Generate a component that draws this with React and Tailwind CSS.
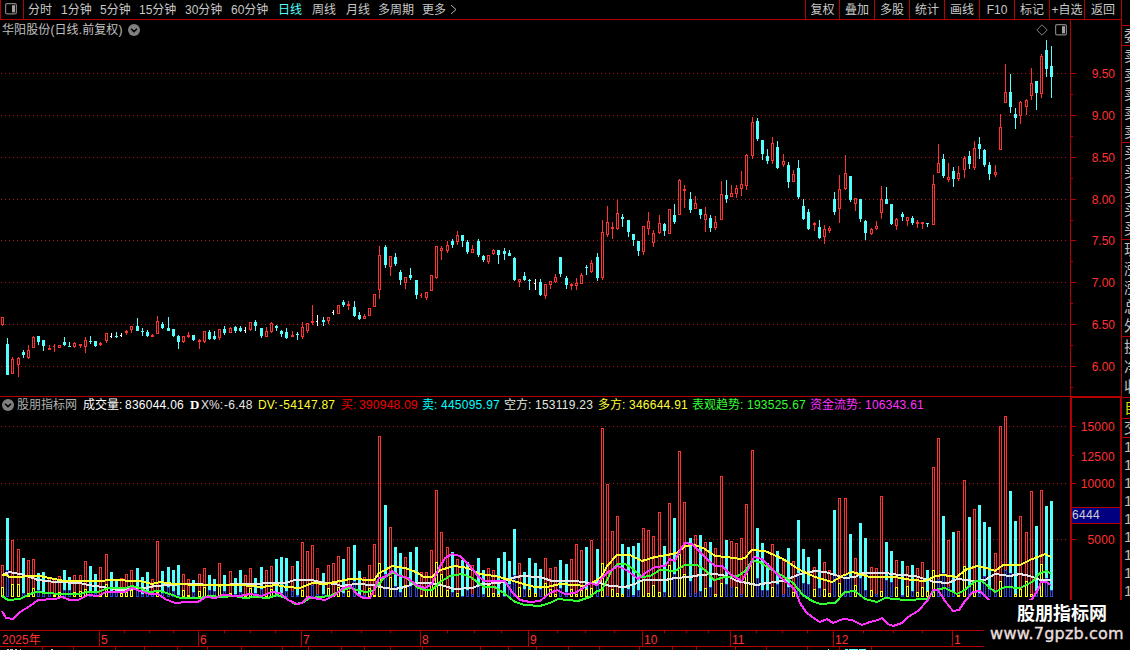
import React from "react";

const CYAN = "#54ffff";
const RED = "#ff3232";
const LINE = "#b40000";

// type, high, body top, body bottom, low
const CANDLES = `r317,317,325,326 c338,344,375,375 r357,359,374,374 r357,358,365,377 c350,352,355,358 r345,350,358,359 r336,337,348,348 c336,336,342,345 c340,340,346,351 r345,348,350,350
r344,346,347,352 r345,345,348,348 c337,342,345,346 c342,346,347,347 r342,343,347,348 r344,344,346,348 r337,340,347,353 c336,341,342,344 c341,341,346,347 r342,343,345,346
r333,333,341,343 w333,336,337,338 c332,336,337,338 w333,335,336,337 r330,331,333,335 r326,326,330,333 c318,326,331,331 c328,331,332,336 c330,332,336,337 r334,335,337,337
r316,321,334,334 c322,324,328,329 c317,328,331,331 c329,329,336,337 c335,336,342,349 r336,336,342,343 r332,335,337,338 c335,335,340,341 r339,340,342,349 r331,331,342,343
c330,332,339,340 c331,336,339,340 r329,329,338,340 c326,329,333,335 r327,328,333,333 c326,327,331,333 c326,328,331,332 w327,330,331,333 r322,322,330,331 c320,322,326,331
c328,328,336,338 r327,331,337,337 r322,323,332,333 c325,326,328,331 c330,331,334,337 c328,332,338,339 r331,335,337,337 c332,334,335,340 r322,327,337,339 r323,323,331,333
r305,321,323,325 w315,321,322,326 c317,320,322,326 r317,317,321,324 w310,312,313,315 r305,305,314,314 c300,302,305,307 r301,304,306,310 c301,307,316,317 c312,315,319,320
r314,316,319,319 r308,308,316,316 r294,294,307,307 r246,255,290,299 c245,247,265,268 r256,256,267,276 c253,257,264,266 c270,272,280,285 r277,277,283,289 c268,275,278,280
c280,280,295,299 r293,295,296,298 r292,292,298,300 r275,275,291,291 r246,246,278,279 r246,248,251,260 r241,245,251,253 c239,241,245,248 r231,235,242,245 c235,235,241,247
c240,242,252,254 r245,249,253,253 c239,241,255,257 c255,256,260,262 r255,255,262,264 r249,250,254,255 c250,250,255,264 c248,251,254,260 c250,253,256,256 c257,258,280,281
r279,279,282,287 c272,276,280,281 c279,280,281,290 w279,283,284,290 c279,282,295,296 r284,284,296,299 r281,281,285,289 r274,277,282,283 c257,257,274,277 c276,278,285,289
r283,284,286,290 r278,283,286,290 r273,275,284,284 c265,267,268,275 r260,263,272,273 c253,257,278,281 r220,232,278,280 r206,222,235,237 r222,227,229,239 r200,213,229,230
c214,217,219,227 c220,220,232,237 c234,234,240,246 c241,241,251,256 r226,226,252,255 r212,221,229,235 r230,233,243,247 r215,223,233,234 c223,224,231,236 r209,209,234,234
c204,215,222,224 r179,180,215,215 r185,189,191,208 c192,199,210,213 r196,203,209,209 c209,209,215,219 r207,214,220,232 c215,218,228,232 r216,222,228,230 r181,194,220,220
c180,195,199,203 r185,193,197,197 r185,188,194,198 r171,184,189,196 r154,155,186,190 r117,122,156,159 c118,121,139,141 c140,140,154,160 c149,156,161,164 r137,143,161,164
c141,147,168,169 r154,161,165,167 c162,165,182,188 r170,174,182,182 c160,168,197,199 c199,206,219,220 c209,212,229,230 r222,223,225,231 c220,227,238,239 r225,229,237,244
r226,228,231,233 c192,199,212,215 r175,189,209,223 r155,173,189,190 c176,176,200,202 r198,198,204,211 c199,199,219,222 c220,221,233,240 r228,229,234,235 r221,226,229,230
r186,199,213,219 c187,199,204,204 c204,204,224,225 r218,219,226,230 c212,214,217,221 r217,217,221,226 c216,218,223,225 r220,222,224,228 r222,222,224,229 c223,223,224,227
r175,184,225,225 r144,163,173,173 c154,159,176,178 r163,177,180,182 c167,171,179,187 r166,173,179,181 r156,158,170,178 c151,156,164,169 r141,148,168,170 c137,144,149,159
c149,150,165,167 c162,165,174,180 r165,172,175,177 r114,127,150,150 r64,92,103,103 c74,92,107,113 c108,114,118,129 r101,102,116,124 r99,100,107,115 r68,83,96,100
c81,81,93,110 r54,56,94,98 c40,50,69,77 c46,66,77,98`
  .split(/\s+/)
  .map((s) => [s[0], ...s.slice(1).split(",").map(Number)]);

// bar colour, bar top, flow colour (y/b), flow top
const VOLUMES = `r565y587 c518b570 r540y584 r549y584 c558b593 r560y593 r559y588 c573b590 c572b592 r577b593
r578y595 r576y592 c570b590 c577b590 r575y592 r575y591 r561y589 c566b592 c574b593 r567y594
r554y584 c572b592 c579b592 r578y593 r574y592 r570y590 c568b590 c577b594 c572b593 r579b594
r541y592 c571b593 c567b587 c570b591 c565b595 r574y590 r579y595 c580b592 r574y591 r568y587
c575b590 c579b591 r563y586 c575b591 r571y593 c578b594 c570b592 r575y595 r568y588 c578b593
c567b589 r570y594 r566y589 c559b594 c557b593 c558b591 r566b591 c561b595 r542y590 r551y596
r545b585 r568b594 c573b594 r565y588 r563y596 r556y587 c559b593 r547y591 c545b581 c571b596
r577b595 r565y588 r544y595 r436y563 c505b574 r527y577 c547b586 c553b592 r557y585 c552b586
c547b585 r572y595 r572y590 r550y582 r490y562 r532y574 r547y590 c552b592 r559y593 c560b596
c562b590 r565b594 c558b586 c570b594 r568y585 r570y593 c558y594 c552b596 c561b584 c529b575
r563y587 c572b589 c558y589 c563y593 c569b589 r558y583 r568y589 r567y594 c560b588 c564b592
r559y589 r544y594 r550y590 c547y589 r540y588 c549b584 r428y563 r484b596 r531y589 r516y593
c544y594 c547b589 c546b595 c543b590 r528y579 r530y593 r536y585 r512y592 c546b592 r503y565
c518b574 r451y554 r502y574 c538b581 r535b593 c535b591 r542y588 c542b587 r548y594 r476y583
c540b584 r541b587 r543y587 r538b594 r504y570 r450y560 c528b578 c543b590 c563b590 r544y587
c551b584 r560b594 c548b587 r561y592 c520b573 c549b583 c557b584 r567y589 c549b588 r562y589
r570y593 c510b574 r498y583 r498b575 c534b577 r558y585 c523b578 c538b590 r567y590 r568b594
r496y591 c542b580 c551b582 r560y587 c561b595 r566y586 c565b591 r568y592 r562y587 c570y591
r467y570 r438b579 c516b573 r540b587 c532b592 r531y595 r480y566 c517b587 r509y580 c505b593
c522b576 c527b589 r553b590 r426y581 r416b570 c491b573 c521y594 r516y589 r532y581 r491y594
c526b591 r490y564 c506b578 c501b590`
  .split(/\s+/)
  .map((s) => [s[0], +s.slice(1, 4), s[4], +s.slice(5)]);

const YELLOW_LINE =
  "2,575 7,575 9,577 40,576 64,581 100,581 110,580 140,581 152,584 160,582 175,584 200,585 240,585 262,587 276,585 287,587 300,588 312,583 325,584 335,582 350,579 374,580 379,573 385,570 392,566 405,568 416,572 424,577 432,577 440,570 455,566 468,568 480,574 495,576 510,580 520,583 535,587 547,587 560,584 575,585 585,586 597,580 602,576 607,566 617,555 630,555 642,561 655,557 667,555 677,553 685,546 695,545 705,549 715,556 727,557 740,559 745,558 752,550 765,551 783,559 800,570 815,577 832,582 842,576 852,572 870,577 895,577 912,580 925,581 936,576 943,575 957,577 965,570 977,566 990,569 995,571 1003,565 1020,565 1030,560 1038,557 1045,554 1051,557";
const WHITE_LINE =
  "2,575 9,572 20,574 30,577 38,580 55,582 80,583 88,585 110,588 120,590 130,589 145,588 155,586 170,585 185,584 220,585 240,584 260,584 265,583 285,583 295,580 312,580 320,582 335,584 342,586 355,584 374,585 385,588 395,589 405,587 415,583 430,583 440,585 455,589 472,588 483,584 500,583 512,578 522,576 540,577 552,581 575,581 590,583 600,583 610,586 625,587 635,584 643,580 665,580 675,578 690,577 700,575 715,574 727,576 737,581 747,583 757,585 767,583 783,581 800,574 815,571 825,572 835,575 845,578 855,577 862,573 885,573 900,575 915,576 925,579 935,582 948,583 957,579 975,581 985,580 995,574 1010,576 1020,574 1030,576 1040,580 1051,580";
const GREEN_LINE =
  "2,596 8,600 20,599 30,594 36,592 60,594 80,594 87,592 98,592 108,588 125,588 132,586 140,588 148,592 160,591 170,594 180,598 200,598 210,596 222,597 235,596 245,598 255,597 268,598 277,595 285,598 295,604 302,603 310,598 320,597 330,596 340,591 350,588 357,590 365,592 373,591 378,585 385,577 392,573 400,575 408,579 418,588 425,590 432,590 440,582 450,576 462,574 472,578 484,587 495,587 505,594 515,602 525,605 540,606 550,603 558,599 578,601 590,597 597,591 602,590 607,580 612,570 618,564 625,564 632,568 642,577 650,576 660,570 675,571 685,565 697,565 705,570 714,580 725,577 738,576 745,571 752,561 760,562 770,569 783,576 793,583 803,595 812,601 820,604 835,603 845,592 855,591 865,599 877,602 885,598 905,600 927,599 935,590 945,588 957,594 965,590 975,581 982,581 995,592 1005,587 1020,588 1032,582 1040,573 1047,571 1051,574";
const PINK_LINE =
  "2,611 6,618 13,619 20,612 30,606 38,600 55,599 62,597 70,600 78,600 88,595 98,596 106,592 125,592 132,588 140,591 150,594 158,594 165,599 175,603 187,602 198,602 206,597 216,598 222,595 240,596 250,594 262,596 272,592 280,593 288,600 297,604 302,603 308,597 325,600 335,595 343,588 350,586 357,594 363,598 370,598 374,590 379,578 385,577 392,571 400,576 408,578 416,585 425,588 432,584 438,570 445,558 452,554 460,556 468,564 478,576 484,581 505,581 512,592 520,600 530,602 540,601 550,593 557,590 565,594 575,593 583,588 590,583 597,585 602,578 607,573 618,566 628,571 638,579 645,573 655,567 665,566 670,559 675,561 680,550 685,543 692,544 700,552 708,560 715,566 722,566 730,574 742,581 748,570 754,557 762,559 770,567 780,577 790,585 795,590 800,603 806,612 812,617 820,622 827,619 833,623 843,619 852,620 862,625 870,622 878,620 882,618 888,624 893,626 902,623 908,617 918,611 928,600 933,590 938,590 945,601 953,611 959,610 965,601 973,592 980,591 987,598 1000,610 1015,610 1032,599 1038,590 1041,582 1046,582 1051,585";

const PRICE_ROWS = [73, 115, 157, 199, 240, 282, 324, 366];
const VOLUME_ROWS = [426, 483, 539];

const columnX = (i) => Math.floor(2.62 + 5.169 * i);

function Grid({ rows }) {
  return rows.map((y) => (
    <line key={y} x1="1" x2="1067" y1={y + 0.5} y2={y + 0.5} stroke="#b01414" strokeDasharray="1 3" />
  ));
}

function HollowBar({ x, top, bottom, color }) {
  return (
    <>
      <rect x={x - 1} y={top} width="3" height={bottom - top} fill={color} />
      {bottom - top > 2 && <rect x={x} y={top + 1} width="1" height={bottom - top - 2} fill="#000" />}
    </>
  );
}

function PricePlot() {
  return (
    <svg className="block" width="1070" height="356" viewBox="0 40 1070 356" shapeRendering="crispEdges">
      <Grid rows={PRICE_ROWS} />
      {CANDLES.map(([type, high, top, bottom, low], i) => {
        const x = columnX(i);
        const color = type === "r" ? RED : type === "c" ? CYAN : "#ffffff";
        return (
          <g key={i}>
            <rect x={x} y={high} width="1" height={low - high} fill={color} />
            {type === "r" && bottom - top > 1 ? (
              <HollowBar x={x} top={top} bottom={bottom} color={color} />
            ) : (
              <rect x={x - 1} y={top} width={type === "c" ? 3 : 2} height={bottom - top} fill={color} />
            )}
          </g>
        );
      })}
    </svg>
  );
}

function Trend({ points, color }) {
  return <polyline points={points} fill="none" stroke={color} strokeWidth="2" />;
}

function VolumePlot() {
  return (
    <svg className="block" width="1070" height="216" viewBox="0 414 1070 216" shapeRendering="crispEdges">
      <Grid rows={VOLUME_ROWS} />
      {VOLUMES.map(([type, top, flow, flowTop], i) => {
        const x = columnX(i);
        return (
          <g key={i}>
            {type === "r" ? (
              <HollowBar x={x} top={top} bottom={597} color={RED} />
            ) : (
              <rect x={x - 1} y={top} width="3" height={597 - top} fill={CYAN} />
            )}
            <HollowBar x={x} top={flowTop} bottom={597} color={flow === "y" ? "#ffff00" : "#3048d8"} />
          </g>
        );
      })}
      <Trend points={WHITE_LINE} color="#e6e6e6" />
      <Trend points={YELLOW_LINE} color="#ffff32" />
      <Trend points={GREEN_LINE} color="#32ff32" />
      <Trend points={PINK_LINE} color="#ff32ff" />
    </svg>
  );
}

const PERIODS = [
  ["分时", "w-[33px]"],
  ["1分钟", "w-[39px]"],
  ["5分钟", "w-[39px]"],
  ["15分钟", "w-[46px]"],
  ["30分钟", "w-[46px]"],
  ["60分钟", "w-[47px]"],
  ["日线", "w-[34px] text-[#54ffff]"],
  ["周线", "w-[34px]"],
  ["月线", "w-[32px]"],
  ["多周期", "w-[44px]"],
  ["更多", "w-[28px]"],
];

const ACTIONS = [
  ["复权", "w-[34px]"],
  ["叠加", "w-[35px]"],
  ["多股", "w-[35px]"],
  ["统计", "w-[35px]"],
  ["画线", "w-[35px]"],
  ["F10", "w-[35px]"],
  ["标记", "w-[35px]"],
  ["+自选", "w-[35px]"],
  ["返回", "w-[37px]"],
];

function PanelIcon() {
  return (
    <svg width="12" height="12" viewBox="0 0 12 12">
      <rect x="0.6" y="0.6" width="10.8" height="10.3" rx="1.5" fill="none" stroke="#808080" strokeWidth="1.2" />
      <rect x="7" y="2.2" width="3" height="7.2" fill="#a0a0a0" />
    </svg>
  );
}

function CollapseIcon() {
  return (
    <svg width="12" height="12" viewBox="0 0 12 12">
      <circle cx="6" cy="6" r="6" fill="#808080" />
      <path d="M3 4.8 6 7.6 9 4.8" fill="none" stroke="#000" strokeWidth="1.5" />
    </svg>
  );
}

function Header() {
  return (
    <header className="flex h-[20px] shrink-0 border-b border-l border-[#b40000] text-[#c8c8c8]">
      <div className="flex w-[23px] items-center border-r border-[#b40000] pl-[4px] pb-[2px]">
        <PanelIcon />
      </div>
      <nav className="flex flex-1 items-center pl-[4px]">
        {PERIODS.map(([label, style]) => (
          <span key={label} className={style}>{label}</span>
        ))}
        <svg width="7" height="11" viewBox="0 0 7 11">
          <path d="M1 1 6 5.5 1 10" fill="none" stroke="#b0b0b0" />
        </svg>
      </nav>
      <div className="flex">
        {ACTIONS.map(([label, style]) => (
          <span key={label} className={`flex items-center justify-center border-l border-[#b40000] ${style}`}>
            {label}
          </span>
        ))}
      </div>
      <div className="w-px bg-[#b40000]" />
    </header>
  );
}

function TitleRow() {
  return (
    <div className="flex h-[20px] items-center pl-[2px] text-[#c0c0c0]">
      <span className="w-[126px] tracking-[0.1px]">华阳股份(日线.前复权)</span>
      <CollapseIcon />
      <div className="ml-auto flex items-center gap-[7px] pr-[3px]">
        <svg width="12" height="12" viewBox="0 0 12 12">
          <path d="M6 .8 11.2 6 6 11.2 .8 6Z" fill="none" stroke="#808080" />
        </svg>
        <PanelIcon />
      </div>
    </div>
  );
}

const READINGS = [
  ["成交量:", "836044.06", "w-[42px]", "w-[65px]", "text-white"],
  ["X%:", "-6.48", "w-[23px]", "w-[34px]", "text-[#e6e6e6]"],
  ["DV:", "-54147.87", "w-[21px]", "w-[62px]", "text-[#ffff32]"],
  ["买:", "390948.09", "w-[18px]", "w-[63px]", "text-[#f00000]"],
  ["卖:", "445095.97", "w-[19px]", "w-[63px]", "text-[#00ffff]"],
  ["空方:", "153119.23", "w-[31px]", "w-[63px]", "text-[#e0e8e0]"],
  ["多方:", "346644.91", "w-[31px]", "w-[63px]", "text-[#ffff32]"],
  ["表观趋势:", "193525.67", "w-[55px]", "w-[63px]", "text-[#32ff32]"],
  ["资金流势:", "106343.61", "w-[55px]", "w-[63px]", "text-[#ff32ff]"],
];

function Reading({ item: [label, value, labelWidth, valueWidth, color] }) {
  return (
    <span className={`flex ${color}`}>
      <span className={labelWidth}>{label}</span>
      <span className={`tracking-[0.25px] ${valueWidth}`}>{value}</span>
    </span>
  );
}

function ReadingsRow() {
  return (
    <div className="flex h-[16px] items-center pl-[2px] whitespace-nowrap">
      <CollapseIcon />
      <span className="ml-[3px] w-[66px] text-[#b0b0b0]">股朋指标网</span>
      <Reading item={READINGS[0]} />
      <span className="w-[11px] font-['Liberation_Serif',serif] text-[13px] font-bold text-white">D</span>
      {READINGS.slice(1).map((item) => (
        <Reading key={item[0]} item={item} />
      ))}
    </div>
  );
}

function PriceScale() {
  return (
    <div className="flex w-[52px] border-x border-[#b40000] text-[#ff3232]">
      <svg width="6" height="376" viewBox="0 20 6 376" shapeRendering="crispEdges">
        {PRICE_ROWS.map((y) => (
          <g key={y} fill={LINE}>
            <rect x="0" y={y} width="5" height="1" />
            <rect x="0" y={y + 21} width="2" height="1" />
          </g>
        ))}
      </svg>
      <div className="flex flex-1 flex-col pt-[33px] pr-[6px]">
        {["9.50", "9.00", "8.50", "8.00", "7.50", "7.00", "6.50", "6.00"].map((p) => (
          <span key={p} className="flex h-[41.86px] items-center justify-end">{p}</span>
        ))}
      </div>
    </div>
  );
}

function VolumeScale() {
  return (
    <div className="flex w-[52px] flex-col border-x-2 border-t-2 border-[#b40000] text-[#ff3232]">
      <div className="flex h-[109px]">
        <svg width="4" height="109" viewBox="0 398 4 109" shapeRendering="crispEdges" fill={LINE}>
          <rect x="0" y="426" width="4" height="1" />
          <rect x="0" y="455" width="2" height="1" />
          <rect x="0" y="483" width="4" height="1" />
        </svg>
        <div className="flex flex-1 flex-col pt-[14px] pr-[5px] text-right tracking-[0.2px]">
          <span className="flex h-[30px] items-center justify-end">15000</span>
          <span className="flex h-[30px] items-center justify-end">12500</span>
          <span className="flex h-[24px] items-center justify-end">10000</span>
        </div>
      </div>
      <div className="flex h-[17px] items-center border-y border-[#b40000] bg-[#000080] tracking-[0.3px] text-[#d0d0d0]">
        <span className="-mt-px">6444</span>
      </div>
      <div className="flex h-[34px]">
        <div className="mt-[15px] h-px w-[4px] bg-[#b40000]" />
        <div className="flex flex-1 items-center justify-end pr-[5px] pb-[2px] tracking-[0.2px]">5000</div>
      </div>
    </div>
  );
}

const DATES = [
  ["2025年", "w-[99px]"],
  ["5", "w-[99px]"],
  ["6", "w-[103px]"],
  ["7", "w-[119px]"],
  ["8", "w-[108px]"],
  ["9", "w-[114px]"],
  ["10", "w-[88px]"],
  ["11", "w-[103px]"],
  ["12", "w-[119px]"],
  ["1", "w-[100px]"],
];

const WEEK_TICKS = [124, 149, 173, 224, 250, 275, 331, 361, 390, 447, 474, 501, 557, 585, 614, 664, 686, 708, 756, 782, 807, 863, 893, 922];
const LOWER_TICKS = [42, 73, 115, 144, 177, 207, 241, 282, 308, 341, 364, 390, 422, 480, 508, 536, 568, 599, 639, 672, 696, 735, 766, 807, 839, 871];

function DateAxis() {
  return (
    <div className="flex h-[20px] shrink-0 flex-col">
      <svg className="block" width="1122" height="3" shapeRendering="crispEdges" fill={LINE}>
        <rect width="1122" height="1" />
        {[99, 198, 301, 420, 528, 642, 730, 833, 952].map((x) => (
          <rect key={x} x={x} y="1" width="1" height="2" />
        ))}
        {WEEK_TICKS.map((x) => <rect key={x} x={x} y="1" width="1" height="2" />)}
      </svg>
      <div className="flex h-[13px] text-[#ff3232]">
        {DATES.map(([label, width]) => (
          <span key={label} className={`flex items-center border-l border-[#b40000] pl-[1px] first:border-black ${width}`}>
            {label}
          </span>
        ))}
      </div>
      <svg className="block" width="1122" height="4" shapeRendering="crispEdges" fill={LINE}>
        <rect width="1122" height="1" />
        {LOWER_TICKS.map((x) => <rect key={x} x={x} y="1" width="1" height="3" />)}
        <path d="M7 3.5h2m1 0h3m2 0h2m3 0h1m30 0h2" stroke="#c0c0c0" fill="none" />
        <path d="M828 3.5h1m16 0h3m1 0h9m1 0h7" stroke={CYAN} fill="none" />
      </svg>
    </div>
  );
}

function StripGroup({ items, className }) {
  return (
    <div className={`flex flex-col justify-around overflow-hidden border-t border-[#b40000] pl-[2px] ${className}`}>
      {items.map((t, i) => (
        <span key={i} className="w-[15px] shrink-0 leading-[18px]">{t}</span>
      ))}
    </div>
  );
}

function QuoteStrip() {
  return (
    <aside className="flex w-[8px] flex-col overflow-hidden pt-[25px] text-[15px] text-[#c0c0c0]">
      <StripGroup items={["委"]} className="h-[20px] shrink-0" />
      <StripGroup items={["卖", "卖", "卖", "卖", "卖"]} className="h-[97px] shrink-0" />
      <StripGroup items={["买", "买", "买", "买", "买"]} className="h-[97px] shrink-0" />
      <StripGroup items={["现", "涨", "涨", "总", "外"]} className="h-[97px] shrink-0" />
      <StripGroup items={["换", "净", "收"]} className="h-[61px] shrink-0" />
      <StripGroup items={["自"]} className="h-[21px] shrink-0 text-[#d8d800]" />
      <StripGroup items={["交"]} className="h-[19px] shrink-0" />
      <StripGroup items={["1", "1", "1", "1", "1", "1", "1", "1", "1"]} className="h-[163px] shrink-0" />
    </aside>
  );
}

export default function App() {
  return (
    <div className="relative flex h-[650px] w-[1130px] overflow-hidden bg-black font-['Liberation_Sans','Noto_Sans_CJK_SC',sans-serif] text-[12px] leading-[14px] whitespace-nowrap">
      <div className="flex w-[1122px] shrink-0 flex-col">
        <Header />
        <section className="flex h-[376px] shrink-0">
          <div className="w-[1070px]">
            <TitleRow />
            <PricePlot />
          </div>
          <PriceScale />
        </section>
        <section className="flex h-[234px] shrink-0">
          <div className="w-[1070px] border-t border-[#b40000]">
            <div className="h-[17px]">
              <ReadingsRow />
            </div>
            <VolumePlot />
          </div>
          <VolumeScale />
        </section>
        <DateAxis />
      </div>
      <QuoteStrip />
      <div className="absolute right-0 bottom-0 flex h-[50px] w-[146px] flex-col items-center bg-black pt-[4px] text-white">
        <span className="pl-[10px] text-[18px] leading-[21px] font-bold">股朋指标网</span>
        <span className="font-['DejaVu_Sans',sans-serif] text-[16px] leading-[18px] tracking-[0.2px] text-[#e8dede] [-webkit-text-stroke:0.4px_#e8dede]">
          www.7gpzb.com
        </span>
      </div>
    </div>
  );
}
